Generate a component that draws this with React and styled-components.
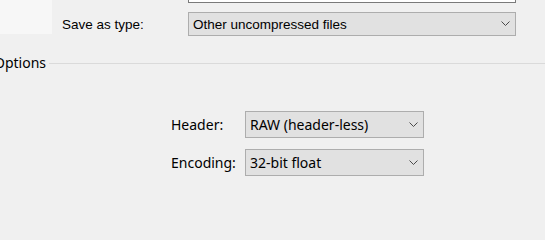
import React from 'react';
import styled, { createGlobalStyle } from 'styled-components';

const GlobalStyle = createGlobalStyle`
  html, body {
    margin: 0;
    padding: 0;
    background: #f0f0f0;
  }
`;

const Window = styled.div`
  width: 545px;
  height: 217px;
  overflow: hidden;
  background: #f0f0f0;
  color: #000;
`;

const TopArea = styled.div`
  display: flex;
  align-items: flex-start;
`;

const NavPane = styled.div`
  width: 52px;
  height: 34px;
  background: #f7f7f7;
  flex-shrink: 0;
`;

const Fields = styled.div`
  display: flex;
  flex-direction: column;
  margin-left: 10px;
`;

const FileNameBox = styled.div`
  margin-left: 126px;
  width: 326px;
  height: 2px;
  background: #fff;
  border: 1px solid #7a7a7a;
  border-top: none;
`;

const FieldRow = styled.div`
  display: flex;
  align-items: center;
  margin-top: ${p => p.$top || 0}px;
`;

const Label = styled.span`
  width: ${p => p.$width}px;
  font-family: ${p => (p.$modern ? '"Noto Sans", "Open Sans", sans-serif' : '"Liberation Sans", Arial, sans-serif')};
  font-size: ${p => p.$size}px;
  flex-shrink: 0;
`;

const Select = styled.div`
  box-sizing: border-box;
  width: ${p => p.$width}px;
  height: ${p => p.$height}px;
  display: flex;
  align-items: center;
  justify-content: space-between;
  padding: 0 5px 0 ${p => p.$pad}px;
  background: #e1e1e1;
  border: 1px solid #adadad;
  font-family: ${p => (p.$modern ? '"Noto Sans", "Open Sans", sans-serif' : '"Liberation Sans", Arial, sans-serif')};
  font-size: ${p => p.$size}px;
  color: #000;
`;

const Chevron = () => (
  <svg width="9" height="6" viewBox="0 0 9 6">
    <path d="M0.5 0.5 L4.5 4.5 L8.5 0.5" fill="none" stroke="#4a4a4a" strokeWidth="1" />
  </svg>
);

const GroupHeader = styled.div`
  display: flex;
  align-items: center;
  margin-top: 18px;
  margin-left: -6px;
`;

const GroupTitle = styled.span`
  font-family: "Noto Sans", "Open Sans", sans-serif;
  font-size: 14px;
  line-height: 18px;
`;

const GroupLine = styled.div`
  flex: 1;
  height: 1px;
  background: #dadada;
  margin-left: 3px;
`;

const Options = styled.div`
  display: flex;
  flex-direction: column;
  gap: 11px;
  margin-top: 39px;
  margin-left: 171px;
`;

export default function App() {
  return (
    <Window>
      <GlobalStyle />
      <TopArea>
        <NavPane />
        <Fields>
          <FileNameBox />
          <FieldRow $top={9}>
            <Label $width={126} $size={13.5}>Save as type:</Label>
            <Select $width={328} $height={24} $pad={4} $size={13.5}>
              Other uncompressed files
              <Chevron />
            </Select>
          </FieldRow>
        </Fields>
      </TopArea>
      <GroupHeader>
        <GroupTitle>Options</GroupTitle>
        <GroupLine />
      </GroupHeader>
      <Options>
        <FieldRow>
          <Label $width={74} $size={14} $modern>Header:</Label>
          <Select $width={179} $height={27} $pad={4} $size={14} $modern>
            RAW (header-less)
            <Chevron />
          </Select>
        </FieldRow>
        <FieldRow>
          <Label $width={74} $size={14} $modern>Encoding:</Label>
          <Select $width={179} $height={27} $pad={4} $size={14} $modern>
            32-bit float
            <Chevron />
          </Select>
        </FieldRow>
      </Options>
    </Window>
  );
}
